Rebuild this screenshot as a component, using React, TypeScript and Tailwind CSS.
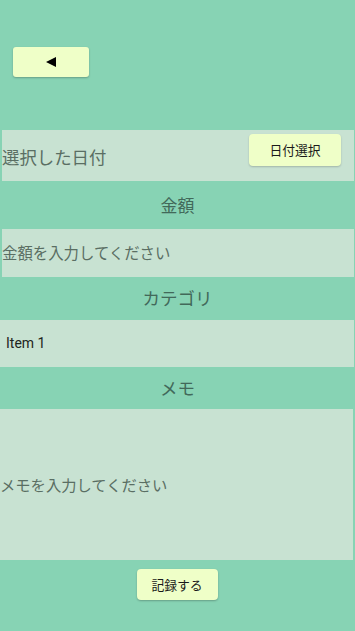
import React from "react";

const jp = { fontFamily: '"Noto Sans CJK JP", "Noto Sans", sans-serif' };

export default function App() {
  return (
    <div className="w-[355px] h-[631px] bg-[#87d3b4] flex flex-col" style={jp}>
      <div className="h-[47px]" />
      <button className="ml-[13px] w-[76px] h-[30px] bg-[#efffc8] rounded-[3px] shadow-[0_1px_2px_rgba(0,0,0,0.25)] flex items-center justify-center">
        <svg width="10" height="10" viewBox="0 0 10 10">
          <polygon points="0,5 10,0 10,10" fill="#000" />
        </svg>
      </button>
      <div className="h-[53px]" />
      <div className="ml-[2px] w-[352px] h-[51px] bg-[#c8e2d2] flex items-start justify-between">
        <span className="mt-[14px] text-[17.4px] leading-[26px] text-[#5a6e63]">選択した日付</span>
        <button className="mt-[4px] mr-[13px] w-[92px] h-[32px] bg-[#efffc8] rounded-[4px] shadow-[0_1px_2px_rgba(0,0,0,0.2)] text-[12.8px] text-[#1a1a1a] flex items-center justify-center">
          日付選択
        </button>
      </div>
      <div className="h-[48px] flex items-center justify-center text-[17px] text-[#42695a]">金額</div>
      <div className="ml-[2px] w-[352px] h-[48px] bg-[#c8e2d2] flex items-center">
        <span className="text-[15.4px] text-[#5a6e63]">金額を入力してください</span>
      </div>
      <div className="h-[43px] flex items-center justify-center text-[17.5px] text-[#42695a]">カテゴリ</div>
      <div className="w-[354px] h-[47px] bg-[#c8e2d2] flex items-center">
        <span className="ml-[6px] text-[14px] text-[#1e2420]" style={{ fontFamily: "Roboto, sans-serif" }}>Item 1</span>
      </div>
      <div className="h-[42px] flex items-center justify-center text-[17.5px] text-[#42695a]">メモ</div>
      <div className="w-[353px] h-[151px] bg-[#c8e2d2] flex items-center">
        <span className="text-[15.3px] text-[#5a6e63]">メモを入力してください</span>
      </div>
      <div className="h-[9px]" />
      <div className="flex justify-center">
        <button className="ml-[-1px] w-[81px] h-[31px] bg-[#efffc8] rounded-[4px] shadow-[0_1px_2px_rgba(0,0,0,0.25)] text-[12.8px] text-[#1a1a1a] flex items-center justify-center">
          記録する
        </button>
      </div>
    </div>
  );
}
